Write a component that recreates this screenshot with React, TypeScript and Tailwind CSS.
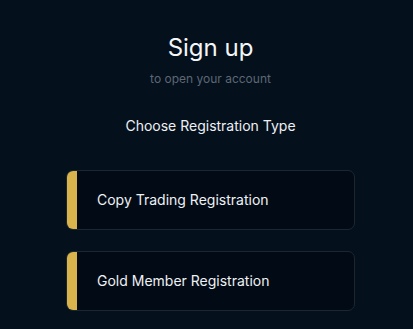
export default function App() {
  const options = ['Copy Trading Registration', 'Gold Member Registration']

  return (
    <div className="min-h-[329px] w-full bg-[#04101c] pl-2 font-['Inter',sans-serif] text-white">
      <div className="flex flex-col items-center pt-[32px]">
        <h1 className="text-[24px] leading-8 font-normal text-[#f4f6f8]">Sign up</h1>
        <p className="mt-[7px] text-[12px] leading-4 text-[#5d6775]">to open your account</p>
        <p className="mt-[29px] text-[14px] leading-5 text-[#eef1f4]">Choose Registration Type</p>

        <div className="mt-[34px] flex w-[289px] flex-col gap-[21px]">
          {options.map((label) => (
            <button
              key={label}
              className="flex h-[60px] items-stretch overflow-hidden rounded-[7px] border border-[#1b2633] bg-[#020b15] text-left"
            >
              <span className="w-[10px] shrink-0 bg-[#d9b34b]" />
              <span className="flex items-center pb-[1px] pl-[20px] text-[14px] text-[#eef1f4]">{label}</span>
            </button>
          ))}
        </div>
      </div>
    </div>
  )
}
